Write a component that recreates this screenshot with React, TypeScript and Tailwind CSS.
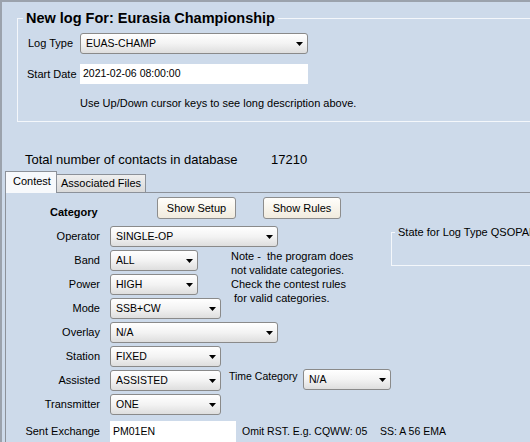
import React from "react";

const font = "font-['Liberation_Sans',Arial,Helvetica,sans-serif]";

function Arrow() {
  return (
    <svg width="7" height="4" viewBox="0 0 7 4" className="mr-[4px] mt-[1px] shrink-0">
      <path d="M0 0 H7 L3.5 4 Z" fill="#000" />
    </svg>
  );
}

function Select({ text, w }: { text: string; w: string }) {
  return (
    <div
      className={`flex items-center h-[21px] rounded-[3px] border border-[#8a8a8a] bg-gradient-to-b from-[#ffffff] via-[#f3f3f3] to-[#dedede] pl-[5px] text-[10.5px] ${w}`}
    >
      <span className="flex-1 truncate">{text}</span>
      <Arrow />
    </div>
  );
}

function Button({ text, w }: { text: string; w: string }) {
  return (
    <div
      className={`flex items-center justify-center h-[22px] rounded-[3px] border border-[#8d8d8d] bg-gradient-to-b from-[#fffefb] to-[#f1ebde] text-[11px] ${w}`}
    >
      {text}
    </div>
  );
}

export default function App() {
  const label = "col-start-1 flex items-center justify-end pr-[10px] h-[21px] text-[11px]";
  return (
    <div
      className={`w-[530px] h-[442px] overflow-hidden bg-[#cddaea] border-t-2 border-l-2 border-[#9ba2ac] text-black ${font}`}
    >
      {/* Group box */}
      <fieldset className="ml-[15px] mt-[8px] w-[530px] h-[112px] border border-[#f4f7fb] p-0 m-0">
        <legend className="ml-[5px] px-[3px] text-[14.5px] font-bold leading-[17px]">
          New log For: Eurasia Championship
        </legend>
        <div className="pl-[10px]">
          <div className="flex items-center mt-[6px]">
            <div className="w-[52px] text-[11px]">Log Type</div>
            <Select text="EUAS-CHAMP" w="w-[228px]" />
          </div>
          <div className="flex items-center mt-[10px]">
            <div className="w-[52px] text-[11px] -ml-[1px]">Start Date</div>
            <div className="w-[228px] h-[20px] bg-white flex items-center pl-[3px] text-[10.5px] ml-[1px]">
              2021-02-06 08:00:00
            </div>
          </div>
          <div className="mt-[13px] pl-[52px] text-[11px] leading-[13px]">
            Use Up/Down cursor keys to see long description above.
          </div>
        </div>
      </fieldset>

      {/* Totals */}
      <div className="flex mt-[30px] ml-[23px] text-[13px] leading-[15px]">
        <span className="w-[246px]">Total number of contacts in database</span>
        <span>17210</span>
      </div>

      {/* Tabs */}
      <div className="flex items-end mt-[4px] ml-[3px] h-[21px]">
        <div className="relative z-10 w-[52px] h-[22px] -mb-[1px] border-t border-l border-r border-[#8c9199] bg-[#f7f9fc] pl-[7px] pt-[3px] text-[11px] leading-[13px]">
          Contest
        </div>
        <div className="w-[89px] h-[18px] border-t border-r border-[#8c9199] bg-gradient-to-b from-[#efefef] to-[#dadada] pl-[4px] pt-[2px] text-[11px] leading-[13px]">
          Associated Files
        </div>
      </div>

      {/* Panel */}
      <div className="ml-[3px] w-[560px] h-[260px] border-t border-l border-[#8c9199] pt-[4px]">
        <div className="flex items-start">
          <div className="w-[107px] ml-[44px] mt-[9px] text-[11px] font-bold leading-[13px]">Category</div>
          <Button text="Show Setup" w="w-[79px]" />
          <div className="ml-[27px]">
            <Button text="Show Rules" w="w-[78px]" />
          </div>
        </div>

        <div className="grid grid-cols-[104px_119px_162px_200px] grid-rows-[repeat(8,21px)] gap-y-[3px] mt-[7px]">
          {/* row 1 */}
          <div className={`${label} row-start-1`}>Operator</div>
          <div className="col-start-2 col-span-2 row-start-1">
            <Select text="SINGLE-OP" w="w-[168px]" />
          </div>
          <div className="col-start-4 row-start-1 row-span-2 overflow-hidden">
            <fieldset className="w-[200px] h-[40px] border border-[#f4f7fb] border-r-0 p-0 m-0">
              <legend className="ml-[3px] px-[3px] text-[11px] leading-[13px] whitespace-nowrap">
                State for Log Type QSOPAR
              </legend>
            </fieldset>
          </div>

          {/* row 2 */}
          <div className={`${label} row-start-2`}>Band</div>
          <div className="col-start-2 row-start-2">
            <Select text="ALL" w="w-[88px]" />
          </div>
          <div className="col-start-3 row-start-2 row-span-3 pl-[2px] -mt-[1px] text-[11px] leading-[14px] whitespace-pre">
            {"Note -  the program does\nnot validate categories.\nCheck the contest rules\n for valid categories."}
          </div>

          {/* row 3 */}
          <div className={`${label} row-start-3`}>Power</div>
          <div className="col-start-2 row-start-3">
            <Select text="HIGH" w="w-[88px]" />
          </div>

          {/* row 4 */}
          <div className={`${label} row-start-4`}>Mode</div>
          <div className="col-start-2 row-start-4">
            <Select text="SSB+CW" w="w-[111px]" />
          </div>

          {/* row 5 */}
          <div className={`${label} row-start-5`}>Overlay</div>
          <div className="col-start-2 col-span-2 row-start-5">
            <Select text="N/A" w="w-[168px]" />
          </div>

          {/* row 6 */}
          <div className={`${label} row-start-6`}>Station</div>
          <div className="col-start-2 row-start-6">
            <Select text="FIXED" w="w-[111px]" />
          </div>

          {/* row 7 */}
          <div className={`${label} row-start-7`}>Assisted</div>
          <div className="col-start-2 row-start-7">
            <Select text="ASSISTED" w="w-[111px]" />
          </div>
          <div className="col-start-3 col-span-2 row-start-7 flex items-start">
            <div className="w-[74px] text-[10.5px] leading-[13px] whitespace-nowrap">Time Category</div>
            <div className="-mt-[1px]">
              <Select text="N/A" w="w-[88px]" />
            </div>
          </div>

          {/* row 8 */}
          <div className={`${label} row-start-8`}>Transmitter</div>
          <div className="col-start-2 row-start-8">
            <Select text="ONE" w="w-[111px]" />
          </div>
        </div>

        <div className="flex items-center mt-[6px]">
          <div className="w-[104px] pr-[10px] text-right text-[11px]">Sent Exchange</div>
          <div className="w-[126px] h-[21px] bg-white flex items-center pl-[3px] text-[10.5px]">PM01EN</div>
          <div className="w-[144px] pl-[6px] text-[10.5px] whitespace-nowrap">Omit RST. E.g. CQWW: 05</div>
          <div className="text-[10.5px] whitespace-nowrap">SS: A 56 EMA</div>
        </div>
      </div>
    </div>
  );
}
